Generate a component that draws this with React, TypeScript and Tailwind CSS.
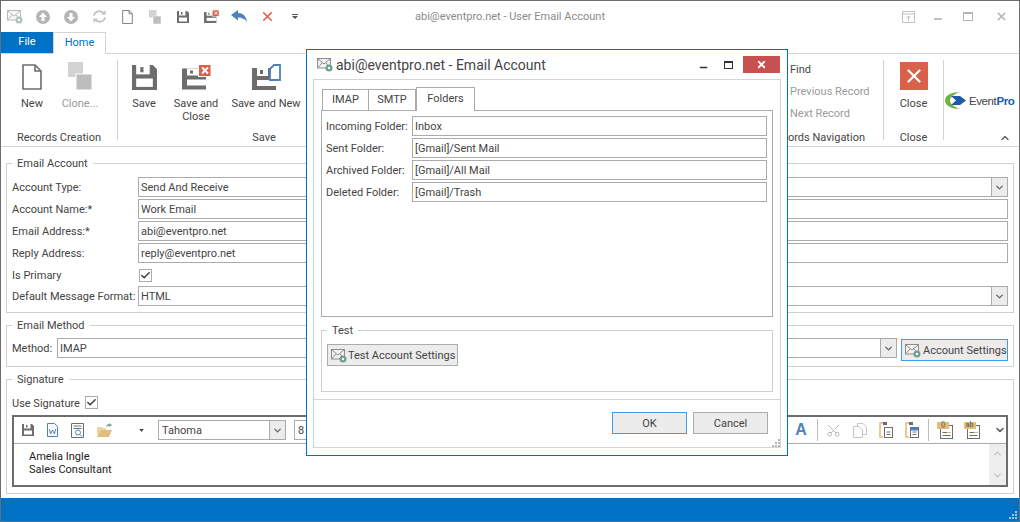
import type { ReactNode } from 'react'
import { ChevronDown, ChevronUp, Scissors, Check, X, Minus } from 'lucide-react'

const font = "[font-family:'Roboto',sans-serif]"

function MailGear({ className = '' }: { className?: string }) {
  return (
    <svg viewBox="0 0 16 15" className={`shrink-0 ${className}`}>
      <rect x="0.5" y="1.5" width="13" height="9.5" fill="#f2f2f2" stroke="#8c8c8c" />
      <path d="M1 2l6 5 6-5M1 10.5l4-4.5M13 10.5L9 6" fill="none" stroke="#8c8c8c" />
      <circle cx="12" cy="11" r="3.5" fill="#6f9f90" />
      <circle cx="12" cy="11" r="1.2" fill="#fff" />
    </svg>
  )
}

function Floppy({ className = '', color = '#6d6d6d' }: { className?: string; color?: string }) {
  return (
    <svg viewBox="0 0 24 24" className={className}>
      <path d="M0 0H20L24 4V24H0Z" fill={color} />
      <rect x="4" y="0" width="13" height="9" fill="#fff" />
      <rect x="8" y="2" width="3" height="5" fill={color} />
      <rect x="4" y="13" width="16" height="8" fill="#fff" />
    </svg>
  )
}

function Doc({ className = '', color = '#6d6d6d' }: { className?: string; color?: string }) {
  return (
    <svg viewBox="0 0 20 26" className={className}>
      <path d="M1 1H13L19 7V25H1Z" fill="#fff" stroke={color} strokeWidth="1.6" />
      <path d="M13 1V7H19" fill="none" stroke={color} strokeWidth="1.6" />
    </svg>
  )
}

function Copy() {
  return (
    <svg viewBox="0 0 14 15" className="h-[15px] w-[14px]" fill="#fff" stroke="#c4c4c4">
      <path d="M4.5.5H10L13.5 4V11.5H4.5Z" />
      <path d="M.5 3.5H6L9.5 7V14.5H.5Z" />
    </svg>
  )
}

function Clone({ className = '' }: { className?: string }) {
  return (
    <svg viewBox="0 0 24 28" className={className}>
      <rect x="0" y="0" width="15" height="15" fill="#d2d2d2" />
      <rect x="8" y="12" width="16" height="16" fill="#bdbdbd" stroke="#fff" strokeWidth="1" />
    </svg>
  )
}

function CircleArrow({ up = false }: { up?: boolean }) {
  return (
    <svg viewBox="0 0 14 14" className="h-[14px] w-[14px]">
      <circle cx="7" cy="7" r="7" fill="#b5b5b5" />
      <path d={up ? 'M7 2.5L11 7H8.5V11H5.5V7H3Z' : 'M7 11.5L11 7H8.5V3H5.5V7H3Z'} fill="#fff" />
    </svg>
  )
}

function Refresh() {
  return (
    <svg viewBox="0 0 16 16" className="h-[15px] w-[15px]" fill="none" stroke="#c4c4c4" strokeWidth="2">
      <path d="M2 7a6 5.5 0 0 1 11-2" />
      <path d="M14 9a6 5.5 0 0 1-11 2" />
      <path d="M14.5 1v5h-5" fill="#c4c4c4" stroke="none" />
      <path d="M1.5 15v-5h5" fill="#c4c4c4" stroke="none" />
    </svg>
  )
}

function Undo() {
  return (
    <svg viewBox="0 0 16 13" className="h-[13px] w-[16px]">
      <path d="M0 5L7 0V3C12 3 15 6 16 12C14 9 11 7.5 7 7.5V10.5Z" fill="#4f81bd" />
    </svg>
  )
}

function SaveClose({ className = '' }: { className?: string }) {
  return (
    <svg viewBox="0 0 29 25" className={className}>
      <path d="M0 4H24V25H0Z" fill="#6d6d6d" />
      <rect x="5" y="4" width="11" height="7" fill="#fff" />
      <rect x="8" y="6" width="3" height="3" fill="#6d6d6d" />
      <rect x="5" y="15" width="19" height="6" fill="#fff" />
      <rect x="16.5" y="0" width="12.5" height="12" fill="#d9614a" stroke="#fff" />
      <path d="M20 3l6 6M26 3l-6 6" stroke="#fff" strokeWidth="1.8" />
    </svg>
  )
}

function SaveNew({ className = '' }: { className?: string }) {
  return (
    <svg viewBox="0 0 29 26" className={className}>
      <path d="M0 4H24V26H0Z" fill="#6d6d6d" />
      <rect x="5" y="4" width="11" height="8" fill="#fff" />
      <rect x="8" y="6" width="3" height="4" fill="#6d6d6d" />
      <rect x="5" y="16" width="19" height="6" fill="#fff" />
      <path d="M18 5L22 1H28V16H18Z" fill="#fff" stroke="#4f81bd" strokeWidth="1.8" />
    </svg>
  )
}

function Logo() {
  return (
    <div className="flex items-center">
      <svg viewBox="0 0 22 17" className="h-[17px] w-[22px] shrink-0">
        <path d="M15 0C7 0 0 3 0 8.500c0 5 7 8.500 15 8.500C9 15 5 12 5 8.500 5 5 9 2 15 0Z" fill="#6cb33f" />
        <path d="M6 4H15L21 8.500 15 13H6L11 8.500Z" fill="#1c5ba8" />
      </svg>
      <span className="ml-[2px] whitespace-nowrap text-[11.5px] leading-[16px] tracking-[-0.4px] text-[#444] [font-family:'Liberation_Sans',sans-serif]">
        Event<span className="font-bold text-[#1c5ba8]">Pro</span>
      </span>
    </div>
  )
}

function QatSlot({ children }: { children: ReactNode }) {
  return <div className="flex h-full w-[28px] items-center justify-center">{children}</div>
}

function RibbonButton({ width, icon, label, disabled }: { width: number; icon: ReactNode; label: string; disabled?: boolean }) {
  return (
    <div className="flex flex-col items-center" style={{ width }}>
      <div className="flex h-[37px] items-end justify-center pb-[7px]">{icon}</div>
      <div className={`whitespace-pre-line text-center leading-[13px] ${disabled ? 'text-[#9a9a9a]' : 'text-[#444]'}`}>{label}</div>
    </div>
  )
}

function Input({ value, className = '', caret }: { value: string; className?: string; caret?: boolean }) {
  return (
    <div className={`flex h-[20px] items-center border border-[#ababab] bg-white ${className}`}>
      <span className="flex-1 truncate pl-[2px] pt-[2px] leading-[14px] text-[#444]">{value}</span>
      {caret && (
        <span className="flex h-full w-[16px] items-center justify-center border-l border-[#ababab] bg-[#ececec]">
          <ChevronDown className="h-[11px] w-[11px] text-[#666]" strokeWidth={3} />
        </span>
      )}
    </div>
  )
}

function FormRow({ label, value, caret }: { label: string; value: string; caret?: boolean }) {
  return (
    <div className="mb-[2px] flex h-[20px] items-center">
      <div className="w-[126px] shrink-0 whitespace-nowrap pt-[2px] text-[#444]">{label}</div>
      <Input value={value} caret={caret} className="flex-1" />
    </div>
  )
}

function Checkbox({ className = '' }: { className?: string }) {
  return (
    <span className={`flex h-[13px] w-[13px] shrink-0 items-center justify-center border border-[#ababab] bg-white ${className}`}>
      <Check className="h-[11px] w-[11px] text-[#444]" strokeWidth={3.5} />
    </span>
  )
}

function FolderRow({ label, value }: { label: string; value: string }) {
  return (
    <div className="mb-[2px] flex h-[20px] items-center">
      <div className="w-[86px] shrink-0 whitespace-nowrap pt-[2px] text-[#444]">{label}</div>
      <Input value={value} className="flex-1" />
    </div>
  )
}

function Group({ title, className = '', children }: { title: string; className?: string; children: ReactNode }) {
  return (
    <fieldset className={`mx-[5px] border border-[#d0d0d0] px-[5px] ${className}`}>
      <legend className="h-[16px] px-[5px] leading-[17px] text-[#444]">{title}</legend>
      {children}
    </fieldset>
  )
}

function Separator({ className = '' }: { className?: string }) {
  return <div className={`w-px bg-[#bdbdbd] ${className}`} />
}

function RibbonSep() {
  return <div className="h-[80px] w-px shrink-0 bg-[#d4d4d4]" />
}

function Paste({ active = false }: { active?: boolean }) {
  return (
    <svg viewBox="0 0 14 16" className="h-[16px] w-[14px]">
      <path d="M4 1H1V15H4" fill="none" stroke="#e5bd7a" strokeWidth="1.6" />
      <rect x="4" y="0" width="4" height="3" fill="#6d6d6d" />
      <rect x="5.5" y="5.5" width="8" height="10" fill="#fff" stroke="#6d6d6d" />
      {active && <rect x="5.5" y="5.5" width="8" height="3" fill="#4f81bd" />}
      <path d="M7.5 10h4M7.5 12.5h4" stroke="#6d6d6d" />
    </svg>
  )
}

function NoteTag({ tag }: { tag: string }) {
  return (
    <div className="relative h-[17px] w-[17px]">
      <svg viewBox="0 0 17 17" className="h-[17px] w-[17px]">
        <rect x="3.5" y="3.5" width="12" height="13" fill="#fff" stroke="#6d6d6d" />
        <path d="M5.5 10.5h8M5.5 13.5h8" stroke="#6d6d6d" />
        <path d="M10 10.5h3.5" stroke="#e5bd7a" />
      </svg>
      <span className="absolute left-0 top-0 h-[7px] w-[12px] bg-[#e5bd7a] text-center text-[7px] font-bold leading-[7px] text-[#6d6d6d]">{tag}</span>
    </div>
  )
}

function GripDots({ className = '' }: { className?: string }) {
  return (
    <svg viewBox="0 0 8 8" className={`h-[8px] w-[8px] ${className}`}>
      <path d="M6 0h2v2H6zM3 3h2v2H3zM6 3h2v2H6zM0 6h2v2H0zM3 6h2v2H3zM6 6h2v2H6z" fill="currentColor" />
    </svg>
  )
}

export default function App() {
  return (
    <div className={`relative flex h-[522px] w-[1020px] flex-col overflow-hidden border border-[#6d6d6d] bg-white text-[11px] ${font}`}>
      {/* title bar */}
      <div className="flex h-[31px] shrink-0 items-center">
        <QatSlot><MailGear className="h-[15px] w-[16px] opacity-60" /></QatSlot>
        <QatSlot><CircleArrow up /></QatSlot>
        <QatSlot><CircleArrow /></QatSlot>
        <QatSlot><Refresh /></QatSlot>
        <QatSlot><Doc className="h-[14px] w-[11px]" /></QatSlot>
        <QatSlot><Clone className="h-[14px] w-[12px]" /></QatSlot>
        <QatSlot><Floppy className="h-[12px] w-[12px]" /></QatSlot>
        <QatSlot><SaveClose className="h-[13px] w-[15px]" /></QatSlot>
        <QatSlot><Undo /></QatSlot>
        <QatSlot><X className="h-[15px] w-[15px] text-[#d9614a]" strokeWidth={2.5} /></QatSlot>
        <QatSlot>
          <svg viewBox="0 0 6 5" className="h-[5px] w-[6px]"><path d="M0 0h6v1H0zM0 2h6L3 5z" fill="#555" /></svg>
        </QatSlot>
        <div className="ml-[106px] whitespace-nowrap pt-[2px] text-[#8a8a8a]">abi@eventpro.net - User Email Account</div>
        <div className="ml-auto flex items-center">
          <div className="flex w-[30px] justify-center">
            <svg viewBox="0 0 13 12" className="h-[12px] w-[13px]" fill="none" stroke="#c0c0c0"><path d="M.5.5h12v11H.5zM.5 3h12M6.5 10V5M4.5 7l2-2 2 2" /></svg>
          </div>
          <div className="flex w-[30px] justify-center"><div className="mt-[5px] h-[2px] w-[8px] bg-[#c0c0c0]" /></div>
          <div className="flex w-[30px] justify-center"><div className="h-[9px] w-[10px] border border-t-2 border-[#b5b5b5]" /></div>
          <div className="flex w-[36px] justify-center"><X className="h-[13px] w-[13px] text-[#b5b5b5]" strokeWidth={3} /></div>
        </div>
      </div>

      {/* ribbon tabs */}
      <div className="flex h-[22px] shrink-0 border-b border-[#d4d4d4]">
        <div className="flex h-[21px] w-[52px] items-center justify-center bg-[#0072c6] text-white">File</div>
        <div className="flex h-[22px] w-[53px] items-center justify-center border-x border-t border-[#d4d4d4] bg-white text-[#0072c6]">Home</div>
      </div>

      {/* ribbon */}
      <div className="flex h-[93px] shrink-0 border-b border-[#d4d4d4] pt-[6px]">
        <div className="flex h-[84px] w-[116px] shrink-0 flex-col">
          <div className="flex flex-1 pl-[7px]">
            <RibbonButton width={48} label="New" icon={<Doc className="h-[26px] w-[20px]" />} />
            <RibbonButton width={48} label="Clone..." disabled icon={<Clone className="h-[28px] w-[24px]" />} />
          </div>
          <div className="h-[13px] text-center leading-[13px] text-[#444]">Records Creation</div>
        </div>
        <RibbonSep />
        <div className="flex h-[84px] w-[300px] shrink-0 flex-col">
          <div className="flex flex-1 pl-[3px]">
            <RibbonButton width={46} label="Save" icon={<Floppy className="h-[25px] w-[25px]" />} />
            <RibbonButton width={58} label={'Save and\nClose'} icon={<SaveClose className="h-[26px] w-[29px]" />} />
            <RibbonButton width={82} label="Save and New" icon={<SaveNew className="h-[26px] w-[29px]" />} />
          </div>
          <div className="h-[13px] w-[292px] text-center leading-[13px] text-[#444]">Save</div>
        </div>
        <div className="flex h-[84px] flex-1 flex-col">
          <div className="flex flex-1 flex-col items-end gap-[9px] pr-[14px] pt-[3px]">
            <div className="h-[13px] w-[79px] leading-[13px] text-[#444]">Find</div>
            <div className="h-[13px] w-[79px] whitespace-nowrap leading-[13px] text-[#9a9a9a]">Previous Record</div>
            <div className="h-[13px] w-[79px] whitespace-nowrap leading-[13px] text-[#9a9a9a]">Next Record</div>
          </div>
          <div className="h-[13px] pr-[18px] text-right leading-[13px] text-[#444]">Records Navigation</div>
        </div>
        <RibbonSep />
        <div className="flex h-[84px] w-[59px] shrink-0 flex-col items-center">
          <div className="flex flex-1 flex-col items-center">
            <div className="mt-[2px] flex h-[28px] w-[28px] items-center justify-center bg-[#d9614a]">
              <X className="h-[22px] w-[22px] text-white" strokeWidth={2.5} />
            </div>
            <div className="mt-[7px] leading-[13px] text-[#444]">Close</div>
          </div>
          <div className="h-[13px] leading-[13px] text-[#444]">Close</div>
        </div>
        <RibbonSep />
        <div className="flex h-[84px] w-[75px] shrink-0 flex-col pl-[1px]">
          <div className="mt-[32px] flex-1"><Logo /></div>
          <div className="flex justify-end pr-[8px]"><ChevronUp className="h-[12px] w-[12px] text-[#666]" strokeWidth={3} /></div>
        </div>
      </div>

      {/* form */}
      <Group title="Email Account" className="mt-[8px] pb-[4px]">
        <div className="pt-[6px]">
          <FormRow label="Account Type:" value="Send And Receive" caret />
          <FormRow label="Account Name:*" value="Work Email" />
          <FormRow label="Email Address:*" value="abi@eventpro.net" />
          <FormRow label="Reply Address:" value="reply@eventpro.net" />
          <div className="mb-[1px] flex h-[20px] items-center">
            <div className="w-[127px] shrink-0 pt-[2px] text-[#444]">Is Primary</div>
            <Checkbox />
          </div>
          <FormRow label="Default Message Format:" value="HTML" caret />
        </div>
      </Group>

      <Group title="Email Method" className="mt-[4px] pb-[5px]">
        <div className="flex items-start pt-[5px]">
          <div className="w-[45px] shrink-0 pt-[1px] leading-[20px] text-[#444]">Method:</div>
          <Input value="IMAP" caret className="flex-1" />
          <div className="ml-[4px] mt-[1px] flex h-[22px] w-[107px] shrink-0 items-center gap-[2px] border border-[#3f9bf0] bg-[#ececec] pl-[3px] text-[#444]">
            <MailGear className="h-[15px] w-[16px]" />
            <span className="whitespace-nowrap pt-[2px]">Account Settings</span>
          </div>
        </div>
      </Group>

      <Group title="Signature" className="mt-[4px] pb-[6px]">
        <div className="mt-[9px] flex h-[13px] items-center text-[#444]">
          <span className="w-[73px] whitespace-nowrap pt-[4px]">Use Signature</span>
          <Checkbox />
        </div>
        <div className="mt-[6px] border-2 border-[#6d6d6d]">
          <div className="flex h-[27px] items-center border-b border-[#ababab]">
            <div className="flex w-[26px] justify-center pl-[2px]"><Floppy className="h-[12px] w-[12px]" /></div>
            <div className="flex w-[25px] justify-center">
              <svg viewBox="0 0 11 14" className="h-[14px] w-[11px]"><path d="M.5.5h7l3 3v10H.5z" fill="#fff" stroke="#4f81bd" /><path d="M2.5 6l1 5 2-4 2 4 1-5" fill="none" stroke="#4f81bd" /></svg>
            </div>
            <div className="flex w-[25px] justify-center">
              <svg viewBox="0 0 13 15" className="h-[15px] w-[13px]" fill="none"><path d="M.5.5h12v14H.5z" stroke="#6d6d6d" /><path d="M2.5 3h8M2.5 5.5h8" stroke="#6d6d6d" /><circle cx="7" cy="9.5" r="2.5" stroke="#4f81bd" /><path d="M9 11.5l2 2" stroke="#4f81bd" /></svg>
            </div>
            <div className="flex w-[28px] justify-center">
              <svg viewBox="0 0 15 14" className="h-[14px] w-[15px]"><path d="M0 4h5l1 1h3v2H3L0 13z" fill="#eed3a4" /><path d="M3 7h12l-3 7H0z" fill="#e5bd7a" /><path d="M9 4c0-2 2-3 3-3V0l3 2-3 2V3c-1 0-2 0-3 1z" fill="#79a797" /></svg>
            </div>
            <div className="w-[21px]" />
            <svg viewBox="0 0 6 4" className="h-[3px] w-[5px]"><path d="M0 0h6L3 4z" fill="#444" /></svg>
            <div className="ml-[14px] flex h-[20px] w-[128px] items-center border border-[#ababab]">
              <span className="flex-1 pl-[3px] pt-[2px] text-[#444]">Tahoma</span>
              <span className="flex h-full w-[16px] items-center justify-center border-l border-[#ababab] bg-[#ececec]">
                <ChevronDown className="h-[11px] w-[11px] text-[#666]" strokeWidth={3} />
              </span>
            </div>
            <div className="ml-[8px] flex h-[20px] w-[40px] items-center border border-[#ababab] pl-[3px] pt-[2px] text-[#444]">8</div>
            <div className="ml-auto flex items-center">
              <span className="w-[22px] text-center text-[16px] font-bold leading-[16px] text-[#4f81bd] [font-family:'Liberation_Sans',sans-serif]">A</span>
              <Separator className="ml-[5px] h-[22px]" />
              <div className="flex w-[31px] justify-center"><Scissors className="h-[15px] w-[15px] -rotate-90 text-[#b5b5b5]" strokeWidth={1.5} /></div>
              <div className="flex w-[21px] justify-center"><Copy /></div>
              <div className="flex w-[31px] justify-center"><Paste /></div>
              <div className="flex w-[22px] justify-center"><Paste active /></div>
              <Separator className="ml-[5px] h-[22px]" />
              <div className="flex w-[30px] justify-center pl-[3px]"><NoteTag tag="{}" /></div>
              <div className="flex w-[26px] justify-center"><NoteTag tag="ab" /></div>
              <div className="flex w-[21px] justify-center pl-[9px]"><ChevronDown className="h-[12px] w-[12px] text-[#555]" strokeWidth={3} /></div>
            </div>
          </div>
          <div className="flex h-[41px]">
            <div className="flex-1 pl-[15px] pt-[6px] leading-[13px] text-[#222]">
              <div>Amelia Ingle</div>
              <div>Sales Consultant</div>
            </div>
            <div className="flex w-[17px] flex-col items-center justify-between bg-[#eeeeee] py-[4px]">
              <ChevronUp className="h-[11px] w-[11px] text-[#c4c4c4]" strokeWidth={3} />
              <ChevronDown className="h-[11px] w-[11px] text-[#c4c4c4]" strokeWidth={3} />
            </div>
          </div>
        </div>
      </Group>

      {/* status bar */}
      <div className="mt-auto flex h-[23px] shrink-0 items-end justify-end bg-[#0072c6] p-[2px]">
        <GripDots className="text-[#9cc7e8]" />
      </div>

      {/* dialog */}
      <div className="absolute left-[305px] top-[48px] flex h-[407px] w-[482px] flex-col border border-[#0072c6] bg-white px-[6px] pb-[7px]">
        <div className="flex h-[29px] shrink-0 items-center">
          <MailGear className="ml-[4px] h-[15px] w-[16px]" />
          <span className="ml-[3px] whitespace-nowrap pt-[1px] text-[14px] text-[#444]">abi@eventpro.net - Email Account</span>
          <div className="ml-auto mr-[1px] flex items-center self-start pt-[6px]">
            <Minus className="mt-[6px] h-[11px] w-[11px] text-[#333]" strokeWidth={3} />
            <div className="ml-[15px] h-[8px] w-[9px] border border-t-2 border-[#333]" />
            <div className="ml-[10px] flex h-[17px] w-[37px] items-center justify-center bg-[#c75050]">
              <X className="h-[11px] w-[11px] text-white" strokeWidth={4} />
            </div>
          </div>
        </div>
        <div className="flex flex-1 flex-col border border-[#d4d4d4]">
          <div className="flex flex-1 flex-col px-[7px] pt-[7px]">
            <div className="flex h-[24px] items-end pl-px">
              <div className="flex h-[22px] w-[47px] items-center justify-center border border-b-0 border-[#ababab] bg-white text-[#444]">IMAP</div>
              <div className="flex h-[22px] w-[47px] items-center justify-center border-r border-t border-[#ababab] bg-white text-[#444]">SMTP</div>
              <div className="relative z-10 flex h-[24px] w-[59px] items-center justify-center border-x border-t border-[#ababab] bg-white text-[#444]">Folders</div>
            </div>
            <div className="-mt-px h-[207px] border border-[#ababab] pl-[4px] pr-[5px] pt-[5px]">
              <FolderRow label="Incoming Folder:" value="Inbox" />
              <FolderRow label="Sent Folder:" value="[Gmail]/Sent Mail" />
              <FolderRow label="Archived Folder:" value="[Gmail]/All Mail" />
              <FolderRow label="Deleted Folder:" value="[Gmail]/Trash" />
            </div>
            <fieldset className="mt-[5px] h-[70px] border border-[#d0d0d0] px-[5px]">
              <legend className="h-[16px] px-[5px] leading-[17px] text-[#444]">Test</legend>
              <div className="mt-[6px] flex h-[22px] w-[131px] items-center gap-[1px] border border-[#ababab] bg-[#ececec] pl-[3px] text-[#444]">
                <MailGear className="h-[15px] w-[16px]" />
                <span className="whitespace-nowrap pt-[2px]">Test Account Settings</span>
              </div>
            </fieldset>
          </div>
          <div className="relative mt-[7px] flex h-[48px] shrink-0 justify-end gap-[6px] border-t border-[#d4d4d4] pr-[12px] pt-[12px]">
            <div className="flex h-[22px] w-[75px] items-center justify-center border border-[#3f9bf0] bg-[#ececec] pt-[2px] text-[#444]">OK</div>
            <div className="flex h-[22px] w-[75px] items-center justify-center border border-[#ababab] bg-[#ececec] pt-[2px] text-[#444]">Cancel</div>
            <GripDots className="absolute bottom-0 right-0 text-[#b5b5b5]" />
          </div>
        </div>
      </div>
    </div>
  )
}
